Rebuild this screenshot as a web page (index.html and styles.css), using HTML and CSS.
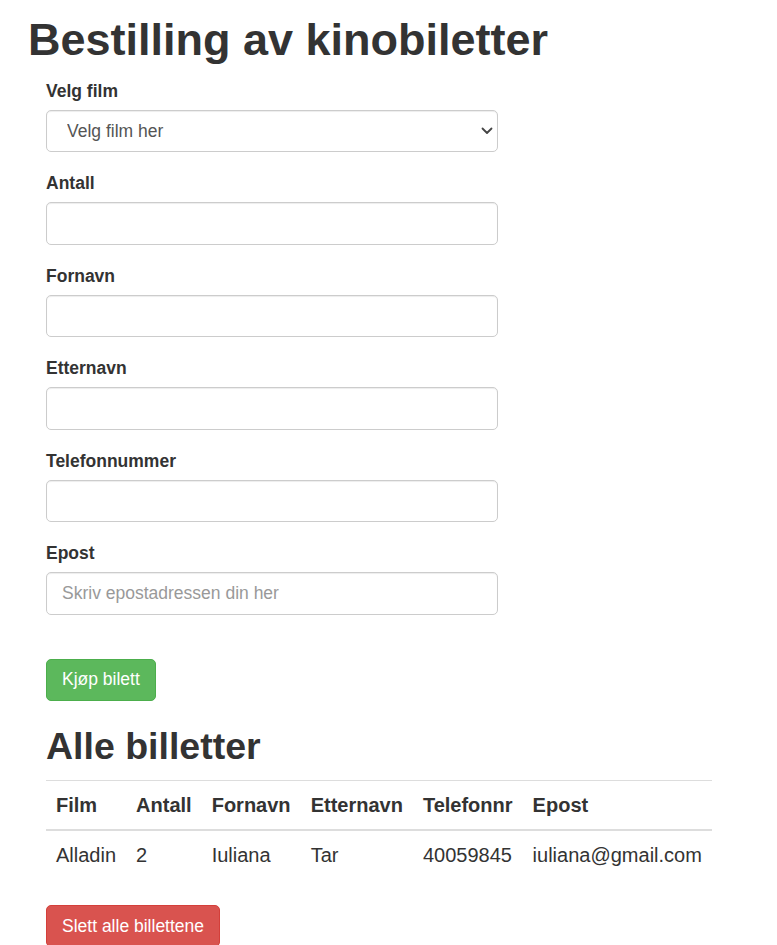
FILE: index.html
```html
<!DOCTYPE html>
<html lang="no">
<head>
<meta charset="utf-8">
<title>Bestilling av kinobiletter</title>
<link rel="stylesheet" href="styles.css">
</head>
<body>
<div class="page">
  <h1 class="title">Bestilling av kinobiletter</h1>
  <div class="content">
    <form class="order-form">
      <div class="form-group">
        <label for="film">Velg film</label>
        <div class="select-wrap">
          <select id="film" class="form-control select">
            <option>Velg film her</option>
            <option>Alladin</option>
          </select>
          <svg class="chevron" width="12" height="8" viewBox="0 0 12 8" aria-hidden="true"><path d="M1.5 1.5 L6 6 L10.5 1.5" fill="none" stroke="#444" stroke-width="1.8" stroke-linecap="round" stroke-linejoin="round"/></svg>
        </div>
      </div>
      <div class="form-group">
        <label for="antall">Antall</label>
        <input id="antall" class="form-control" type="text">
      </div>
      <div class="form-group">
        <label for="fornavn">Fornavn</label>
        <input id="fornavn" class="form-control" type="text">
      </div>
      <div class="form-group">
        <label for="etternavn">Etternavn</label>
        <input id="etternavn" class="form-control" type="text">
      </div>
      <div class="form-group">
        <label for="telefon">Telefonnummer</label>
        <input id="telefon" class="form-control" type="text">
      </div>
      <div class="form-group">
        <label for="epost">Epost</label>
        <input id="epost" class="form-control" type="text" placeholder="Skriv epostadressen din her">
      </div>
      <div class="actions">
        <button type="button" class="btn btn-success">Kjøp bilett</button>
      </div>
    </form>
    <h2 class="subtitle">Alle billetter</h2>
    <table class="tickets">
      <thead>
        <tr><th>Film</th><th>Antall</th><th>Fornavn</th><th>Etternavn</th><th>Telefonnr</th><th>Epost</th></tr>
      </thead>
      <tbody>
        <tr><td>Alladin</td><td>2</td><td>Iuliana</td><td>Tar</td><td>40059845</td><td>iuliana@gmail.com</td></tr>
      </tbody>
    </table>
    <button type="button" class="btn btn-danger">Slett alle billettene</button>
  </div>
</div>
</body>
</html>
```
FILE: styles.css
```css
html, body {
  margin: 0;
  padding: 0;
  background: #fff;
}

body {
  font-family: "Liberation Sans", Arial, Helvetica, sans-serif;
  font-size: 17.5px;
  line-height: 25px;
  color: #333;
}

.page {
  padding-left: 25px;
}

.title {
  margin: 15px 0 14px 3px;
  font-size: 45px;
  line-height: 49.5px;
  font-weight: 700;
  color: #333;
}

.content {
  padding-left: 21px;
}

.order-form {
  width: 452px;
}

.form-group {
  margin-bottom: 18.75px;
}

.form-group label {
  display: inline-block;
  margin-bottom: 6.25px;
  font-weight: 700;
}

.form-control {
  display: block;
  box-sizing: border-box;
  width: 100%;
  height: 42.5px;
  margin: 0;
  padding: 7.5px 15px;
  font-family: inherit;
  font-size: 17.5px;
  line-height: 25px;
  color: #555;
  background: #fff;
  border: 1px solid #ccc;
  border-radius: 5px;
  box-shadow: inset 0 1px 1px rgba(0, 0, 0, 0.075);
  outline: none;
}

.form-control::placeholder {
  color: #999;
  opacity: 1;
}

.select-wrap {
  position: relative;
}

.select {
  appearance: none;
  -webkit-appearance: none;
  padding-left: 20px;
}

.chevron {
  position: absolute;
  right: 5px;
  top: 17px;
  pointer-events: none;
}

.actions {
  padding-top: 25px;
}

.btn {
  display: block;
  box-sizing: border-box;
  height: 42.5px;
  margin: 0;
  padding: 7.5px 15px;
  font-family: inherit;
  font-size: 17.5px;
  line-height: 25px;
  font-weight: 400;
  color: #fff;
  border: 1px solid transparent;
  border-radius: 5px;
  white-space: nowrap;
  cursor: pointer;
}

.btn-success {
  background: #5cb85c;
  border-color: #4cae4c;
}

.btn-danger {
  background: #d9534f;
  border-color: #d43f3a;
  margin-top: 25px;
}

.subtitle {
  margin: 25px 0 12.5px 0;
  font-size: 37.5px;
  line-height: 41.25px;
  font-weight: 700;
  color: #333;
}

.tickets {
  width: 666px;
  border-collapse: collapse;
  border-spacing: 0;
  font-size: 20px;
}

.tickets th,
.tickets td {
  padding: 10px;
  text-align: left;
  vertical-align: top;
  line-height: 28.57px;
  white-space: nowrap;
}

.tickets th {
  font-weight: 700;
  border-top: 1px solid #ddd;
  border-bottom: 2px solid #ddd;
}

.tickets td {
  font-weight: 400;
}
```
